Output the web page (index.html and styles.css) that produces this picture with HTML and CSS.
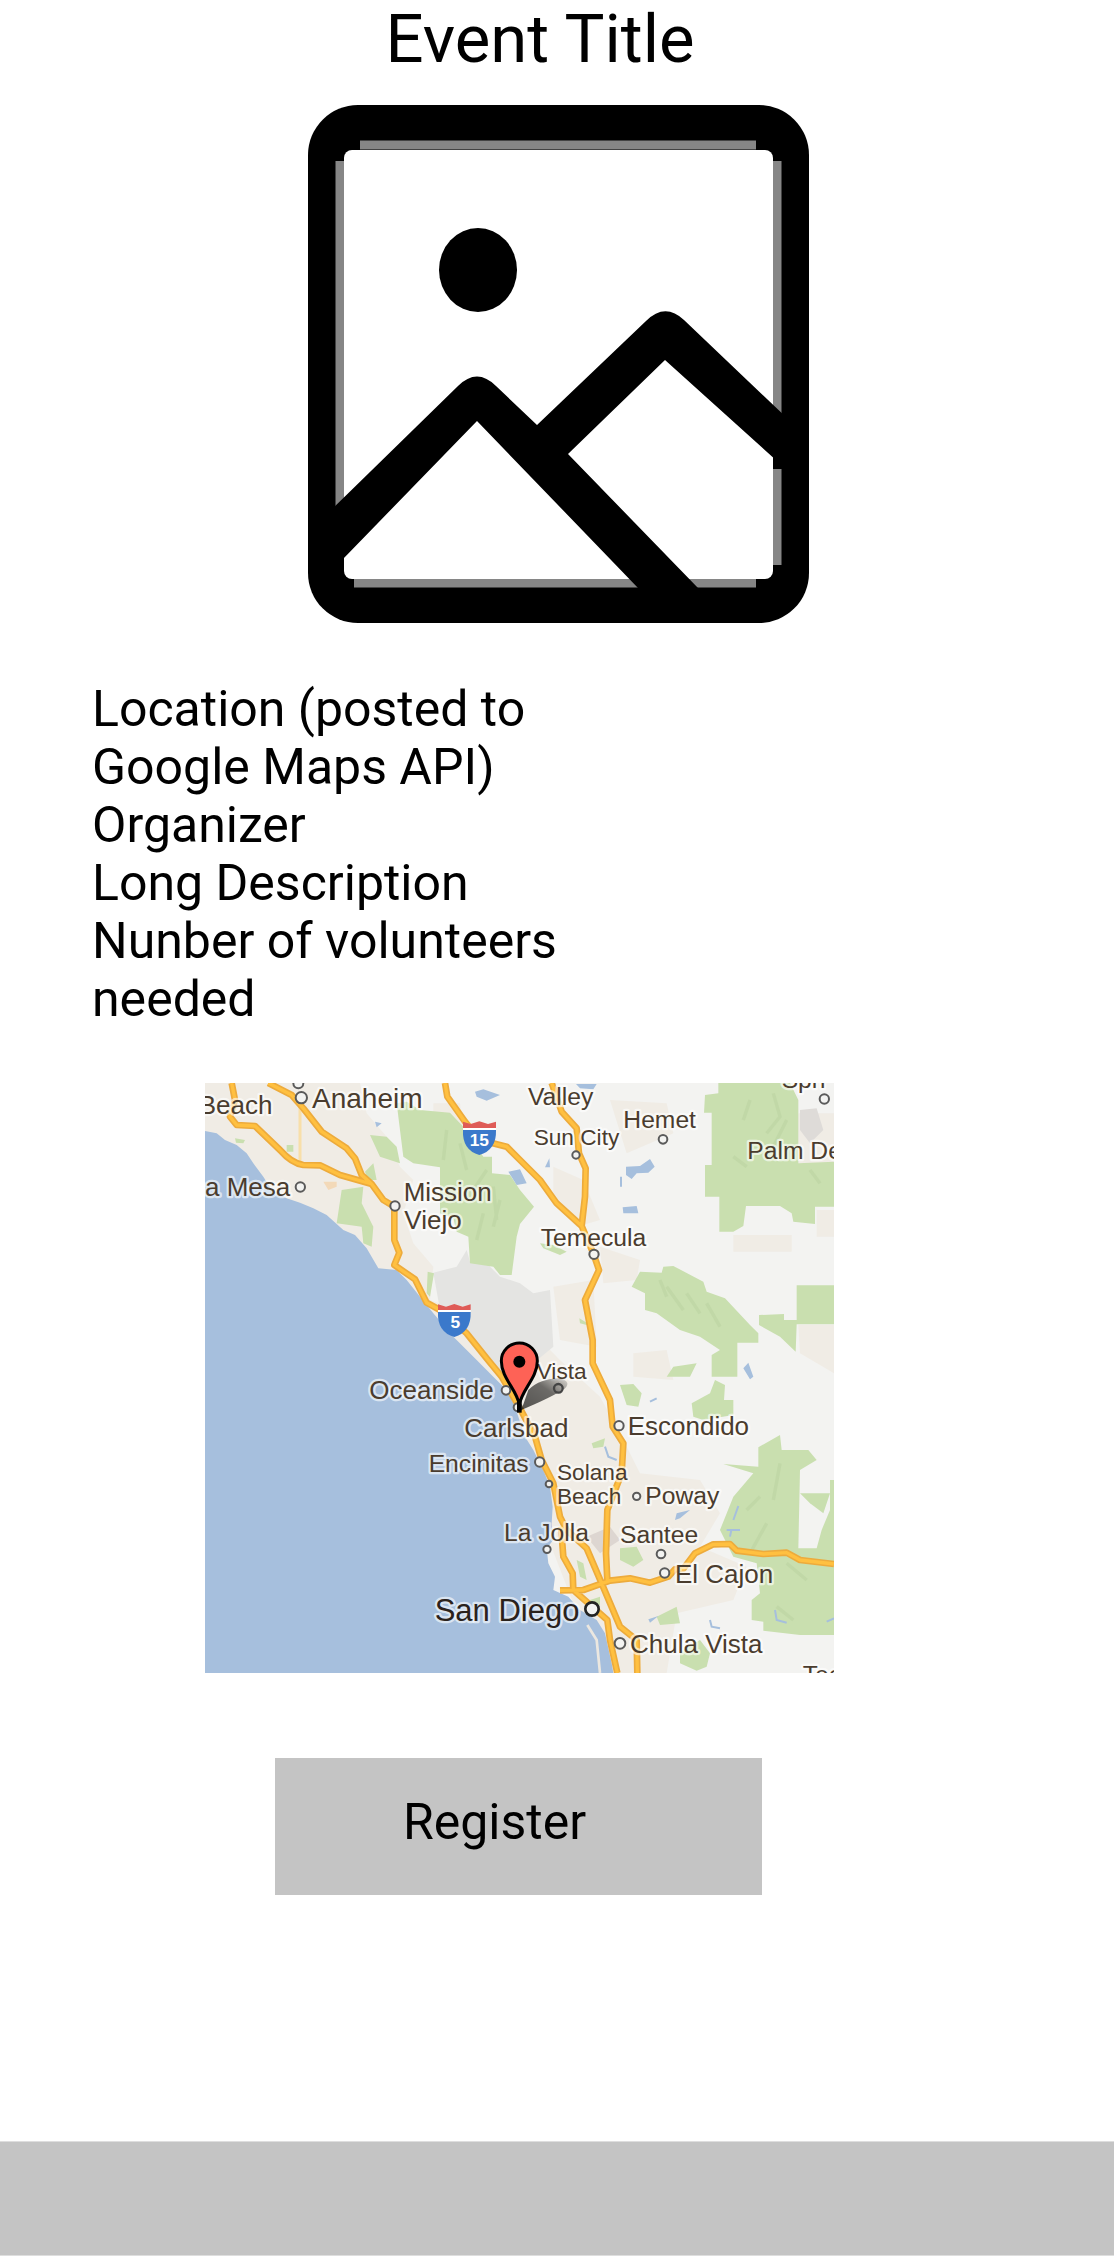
FILE: index.html
```html
<!DOCTYPE html>
<html lang="en">
<head>
<meta charset="utf-8">
<meta name="viewport" content="width=device-width, initial-scale=1">
<title>Event Title</title>
<link rel="stylesheet" href="styles.css">
</head>
<body>
<main class="event">
  <h1 class="event-title">Event Title</h1>
  <svg class="event-image" viewBox="0 0 501 518" role="img" aria-label="Event image">
    <rect width="501" height="518" rx="50" fill="#000"/>
    <path d="M52 40H448M32 56V405M469 56V310M469 364V460M46 478H448" fill="none" stroke="#868686" stroke-width="9"/>
    <rect x="36" y="45" width="429" height="429" rx="8" fill="#fff"/>
    <ellipse cx="170" cy="165" rx="39" ry="42"/>
    <path d="M20 408 150 281Q169 262 188 281L229 320 338 216Q357 197 376 215L480 314V366L357 255 260 349 390 483H330L169 316 36 453 20 465Z"/>
  </svg>
  <section class="event-details">
    <p>Location (posted to Google Maps API)</p>
    <p>Organizer</p>
    <p>Long Description</p>
    <p>Nunber of volunteers needed</p>
  </section>
  <svg class="event-map" viewBox="15 9 1887 1770" role="img" aria-label="Map of the event location">
    <defs>
      <linearGradient id="pin-shadow" x1="0" y1="1" x2="1" y2="0">
        <stop offset="0" stop-opacity=".65"/><stop offset=".6" stop-opacity=".55"/><stop offset="1" stop-opacity=".1"/>
      </linearGradient>
    </defs>
    <rect x="15" y="9" width="1887" height="1770" fill="#f3f3f1"/>
    <g class="map-urban">
      <path d="M15 9H480L500 100 560 170 600 260 640 300 610 400 640 490 700 560 690 660 800 700 900 800 960 850 1000 760 1080 840 1200 950 1260 1060 1320 1180 1500 1200 1560 1300 1500 1400 1640 1460 1600 1560 1430 1600 1400 1779H1200L900 1000 500 620 15 180Z"/>
      <path d="M700 70H780L790 150 700 130ZM1060 260 1150 300 1200 420 1130 440 1060 370ZM1200 500 1320 540 1310 600 1210 610ZM1060 620 1180 600 1190 800 1080 780ZM1600 465H1775V515H1600ZM1795 100H1902V250H1795ZM1850 390H1902V470H1850ZM1795 735H1902V880L1800 820ZM1300 820 1400 810 1420 900 1300 890ZM1230 60 1400 70 1420 160 1280 220Z"/>
    </g>
    <path class="map-base" d="M700 578 770 560 800 510 810 545 860 550 900 590 960 610 1000 640 1050 630 1060 800 1000 850 940 900 890 870 800 760 720 690Z"/>
    <path d="M1160 1370 1230 1340 1260 1380 1200 1420Z" fill="#ddd6d1"/>
    <path d="M1800 90 1850 85 1870 150 1830 190 1800 150Z" fill="#dedbd8"/>
    <path d="M370 305H410V320L385 330Z" fill="#f3d9b8"/>
    <g class="map-park">
      <path d="M590 70 620 65 660 90 750 98 790 140 850 230 876 230V280L930 285 960 330 1002 380 960 432 950 470 935 585H900L880 560 810 550 805 470 770 455 760 415 720 400V262L640 250 610 230Z"/>
      <path d="M510 165 560 170 590 200 600 250 540 230ZM425 330 490 320 485 370 520 440 515 500 490 490 485 440 410 430ZM495 275 520 250 530 300 505 300ZM683 575 702 580 690 650 680 640ZM260 195H280V215H260ZM105 175 135 180 130 190 108 188Z"/>
      <path d="M1515 45 1555 40V9H1770L1795 60V250L1902 245V380H1845V432L1780 425 1775 400 1740 378H1638L1630 438 1600 455H1558V350H1515V255H1535V98H1512Z"/>
      <path d="M1320 575 1385 578 1390 560 1420 558 1510 605 1520 635 1575 655 1650 735 1675 760V788H1612V890H1535V825L1560 810 1500 770 1440 750 1370 700 1335 690 1335 640 1295 620Z"/>
      <path d="M1677 705 1752 702V720H1790V616H1902V733H1790L1787 815 1740 770 1677 735ZM1400 890 1420 860 1490 850 1470 890Z"/>
      <path d="M1260 915 1300 912 1325 940 1315 980 1280 975ZM1475 970 1530 940 1545 900 1575 915 1572 960 1600 960 1600 1005 1510 1020 1480 1010ZM1175 1090 1215 1075 1210 1100 1180 1105ZM1260 1405 1310 1400 1330 1440 1300 1460 1260 1440ZM1440 1715 1500 1680 1530 1720 1520 1760 1490 1772 1440 1750ZM1370 1610 1430 1580 1440 1630 1380 1635ZM1130 1440 1150 1450 1160 1500 1140 1490ZM1170 1560 1200 1550 1200 1575 1175 1580ZM1180 740 1140 730 1138 715ZM1020 490 1060 495 1100 515 1080 525 1030 505Z"/>
      <path d="M1570 1152 1675 1160V1102L1740 1065 1745 1110H1825L1850 1140 1800 1170 1795 1405H1850L1865 1350 1890 1290V1200H1902V1665H1800L1690 1652 1690 1625 1655 1620 1655 1560 1680 1540 1670 1450 1600 1430 1560 1350 1600 1250 1660 1180Z"/>
      <path d="M1800 1240H1890L1870 1300 1830 1270Z"/>
    </g>
    <g class="map-relief">
      <path d="M780 190 800 270M740 150 730 240M860 270 820 330M880 320 890 420M900 360 880 440M850 400 830 480M1650 60 1630 120M1720 40 1740 110 1700 160M1760 120 1720 200M1600 230 1640 260M1830 270 1860 310M1400 620 1450 690M1460 640 1500 700M1380 600 1400 650M1520 670 1560 740M1740 1150 1720 1260M1700 1330 1650 1420M1760 1450 1820 1500M1640 1290 1680 1250M1730 1580 1780 1620"/>
    </g>
    <g class="map-water">
      <path d="M15 153 50 160 75 180 110 195 140 220 160 250 190 290 215 330 260 355 300 368 340 385 380 405 430 450 465 465 500 505 535 565 590 570 620 600 660 650 700 700 760 770 830 840 880 890 925 935 945 980 975 1070 1000 1110 1030 1170 1050 1220 1058 1280 1055 1330 1060 1380 1040 1405 1045 1450 1065 1490 1060 1530 1105 1550 1140 1590 1190 1620 1215 1660 1235 1750 1240 1779H15Z"/>
      <path d="M825 35 850 28 900 45 860 62 830 50ZM925 275 960 268 980 310 950 315ZM1128 12H1190L1180 28 1140 25ZM1278 260 1320 258 1350 237 1364 260 1345 278 1310 280 1295 297 1278 285ZM1268 382 1310 378 1315 400H1270ZM1630 865 1645 848 1660 890 1650 898ZM525 125 545 130 530 142ZM1048 235 1050 262 1035 262ZM1425 1320 1430 1300 1470 1290 1440 1315ZM1345 1618 1375 1608 1350 1628Z"/>
      <path d="M1530 1620 1535 1640 1560 1645M1615 1278 1600 1320M1580 1350 1620 1350M1594 1350 1590 1370M1215 1100 1225 1130 1250 1140M1350 965 1370 955M1725 1590 1730 1620 1760 1628M1880 1625 1902 1615M1263 290V320" fill="none" stroke="#a6bfdd" stroke-width="6"/>
    </g>
    <path d="M1162 1635 1190 1680 1200 1779" fill="none" stroke="#ebe7e0" stroke-width="8"/>
    <path d="M300 80V250" stroke="#f8dfa9" stroke-width="9" fill="none"/>
    <g class="map-road">
      <path id="roads" d="M95 9 105 60 90 110 110 135 165 138 240 210Q275 250 310 255L360 256 420 285 515 312M205 9 275 45 310 85 365 155 440 205 465 235 485 285 515 312 550 360 583 380 583 480 598 518 583 555 645 598 680 668 720 690 800 760 860 835 905 890 960 985 1005 1070 1025 1140 1060 1210 1080 1310 1100 1350 1160 1405 1205 1510 1260 1640 1310 1680 1312 1779M735 9 742 50 795 125 840 180 920 200 960 240 1020 300 1070 370 1145 438M1055 9 1085 95 1130 145 1137 220 1157 265 1155 350 1145 438 1180 520 1197 570 1155 660 1178 780 1178 850 1230 960 1238 1040 1270 1090 1265 1180 1222 1290 1218 1420 1222 1500M1083 1340 1090 1430 1118 1480 1120 1530 1165 1570 1222 1620 1230 1680 1252 1779M1080 1531 1150 1530 1230 1502 1290 1495 1350 1508 1405 1490 1425 1468 1450 1466 1485 1420 1540 1393 1590 1392 1610 1412 1690 1422 1760 1418 1800 1440 1902 1452"/>
      <use href="#roads" class="map-road-top"/>
    </g>
    <g class="map-place">
      <circle cx="295" cy="10" r="15"/><circle cx="304" cy="53" r="17"/><circle cx="301" cy="321" r="14"/><circle cx="585" cy="378" r="14"/><circle cx="1389" cy="178" r="13"/><circle cx="1128" cy="225" r="11"/><circle cx="1873" cy="57" r="14"/><circle cx="1182" cy="523" r="14"/><circle cx="918" cy="931" r="13"/><circle cx="953" cy="982" r="12"/><circle cx="1257" cy="1037" r="14"/><circle cx="1019" cy="1146" r="14"/><circle cx="1047" cy="1212" r="10"/><circle cx="1310" cy="1249" r="11"/><circle cx="1041" cy="1408" r="11"/><circle cx="1383" cy="1422" r="13"/><circle cx="1394" cy="1479" r="14"/><circle cx="1260" cy="1690" r="16"/>
      <circle class="map-place-city" cx="1176" cy="1587" r="20"/>
    </g>
    <g class="map-label">
      <g class="map-label-s">
        <text x="1001" y="195">Sun City</text><text x="1010" y="897">Vista</text><text x="1071" y="1200">Solana</text><text x="1071" y="1273">Beach</text>
      </g>
      <g class="map-label-r">
        <text x="1745" y="24">Spri</text><text x="1642" y="237">Palm De</text>
        <text x="1022" y="497">Temecula</text><text x="686" y="1175">Encinitas</text>
        <text x="1336" y="1272">Poway</text><text x="912" y="1382">La Jolla</text>
        <text x="1260" y="1388">Santee</text><text x="984" y="75">Valley</text>
        <text x="1270" y="145">Hemet</text><text x="1808" y="1808">Teca</text>
      </g>
      <text x="15" y="348">a Mesa</text>
      <text x="611" y="362">Mission</text><text x="613" y="447">Viejo</text>
      <text x="508" y="957">Oceanside</text><text x="793" y="1070">Carlsbad</text>
      <text x="1283" y="1065">Escondido</text>
      <text x="1425" y="1510">El Cajon</text>
      <text x="1290" y="1718">Chula Vista</text>
      <text x="-4" y="103">Beach</text>
      <text class="map-label-m" x="336" y="85">Anaheim</text>
      <text class="map-label-l" x="704" y="1622">San Diego</text>
    </g>
    <g class="map-shield">
      <path d="M789 150H888Q890 210 838 225 786 210 789 150Z" fill="#3b79cb"/><path d="M789 140H888V150H789Z" fill="#fff"/><path d="M789 125 812 132 838 124 864 132 888 125V144H789Z" fill="#df5b57"/>
      <text x="838" y="198">15</text>
      <path d="M714 696H812Q814 756 763 771 711 756 714 696Z" fill="#3b79cb"/><path d="M714 686H812V696H714Z" fill="#fff"/><path d="M714 673 738 680 763 672 788 680 812 673V690H714Z" fill="#df5b57"/>
      <text x="766" y="745">5</text>
    </g>
    <path d="M964 990 985 930Q1020 895 1080 895 1115 905 1095 925 1060 950 964 990Z" fill="url(#pin-shadow)"/>
    <circle cx="1075" cy="925" r="13" fill="none" stroke="#444" stroke-width="7"/>
    <path d="M958 975C952 930 904 895 904 843A54 54 0 0 1 1012 843C1012 895 964 930 958 975Z" fill="#fe6256" stroke="#000" stroke-width="9"/>
    <path d="M951 962H965V998H951Z"/>
    <circle cx="958" cy="845" r="18"/>
  </svg>
  <button class="register" type="button">Register</button>
</main>
<footer class="page-footer"></footer>
</body>
</html>
```
FILE: styles.css
```css
* { box-sizing: border-box; }

body {
  margin: 0;
  min-height: 100vh;
  display: flex;
  flex-direction: column;
  background: #fff;
  color: #000;
  font-family: Roboto, sans-serif;
  font-size: 50px;
  line-height: 58px;
}

.event {
  flex: 1;
  display: flex;
  flex-direction: column;
  align-items: flex-start;
  padding-bottom: 64px;
}

.event-title {
  align-self: center;
  margin: 0;
  padding-right: 34px;
  font-size: 67px;
  font-weight: 400;
  line-height: 78px;
}

.event-image {
  align-self: center;
  display: block;
  width: 501px;
  max-width: 100%;
  margin-top: 27px;
  margin-left: 3px;
}

.event-details {
  max-width: 592px;
  margin-top: 57px;
  padding-left: 92px;
}

.event-details p { margin: 0; }

.event-map {
  display: block;
  width: 629px;
  max-width: 80%;
  margin-top: 55px;
  margin-left: 205px;
}

.map-urban { fill: #f0ece5; }
.map-base { fill: #e4e4e2; }
.map-park { fill: #c9dfaf; }
.map-relief { fill: none; stroke: #b9d29f; stroke-width: 10; opacity: .5; }
.map-water { fill: #a6bfdd; }
.map-road { fill: none; stroke: #edab3c; stroke-width: 20; stroke-linejoin: round; }
.map-road-top { stroke: #ffc040; stroke-width: 10; }
.map-place { fill: #f3f3f1; stroke: #5a5a5a; stroke-width: 6; }
.map-place-city { stroke: #222; stroke-width: 8; }

.map-label {
  fill: #4a3c2e;
  stroke: rgba(255, 255, 255, .6);
  stroke-width: 14;
  stroke-linejoin: round;
  paint-order: stroke;
  font-family: "Liberation Sans", Arial, sans-serif;
  font-size: 78px;
}

.map-label-s { font-size: 68px; }
.map-label-r { font-size: 74px; }
.map-label-m { font-size: 84px; }
.map-label-l { font-size: 93px; fill: #2a221c; }

.map-shield {
  fill: #fff;
  font-family: "Liberation Sans", Arial, sans-serif;
  font-size: 52px;
  font-weight: 700;
  text-anchor: middle;
}

.register {
  width: 487px;
  max-width: 80%;
  height: 137px;
  margin: 85px 0 0 275px;
  padding: 0 48px 10px 0;
  border: 0;
  background: #c4c4c4;
  color: inherit;
  font: inherit;
}

.page-footer {
  height: 115px;
  border: solid #dedede;
  border-width: 1px 0;
  background: #c4c4c4;
}
```
